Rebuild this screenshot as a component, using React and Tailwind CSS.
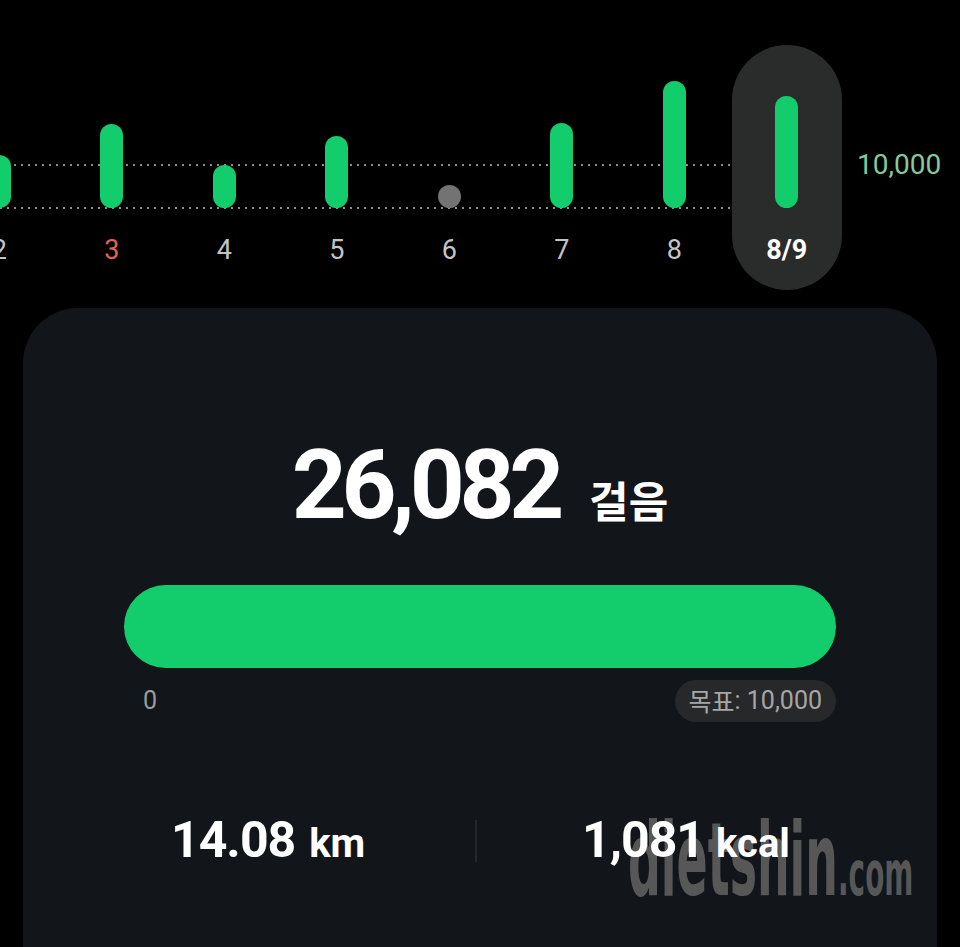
import React from "react";

const days = [
  { label: "2", h: 53 },
  { label: "3", h: 84, red: true },
  { label: "4", h: 43 },
  { label: "5", h: 72 },
  { label: "6", h: 0 },
  { label: "7", h: 85 },
  { label: "8", h: 127 },
  { label: "8/9", h: 112, selected: true },
];

const num = { fontFamily: "Roboto, 'Noto Sans CJK KR', sans-serif" };

const App = () => {
  return (
    <div className="relative w-[960px] h-[947px] overflow-hidden bg-black" style={num}>
      {/* weekly chart */}
      <div className="relative h-[300px]">
        <svg className="absolute left-0 top-0" width="732" height="300">
          <line x1="0" y1="165" x2="732" y2="165" stroke="#8c8c8c" strokeWidth="2" strokeDasharray="2 5" />
          <line x1="0" y1="208" x2="732" y2="208" stroke="#8c8c8c" strokeWidth="2" strokeDasharray="2 5" />
        </svg>
        <div className="relative flex ml-[-57px]">
          {days.map((d) => (
            <div key={d.label} className="w-[112.5px] shrink-0 flex justify-center pt-[45px]">
              <div
                className={`w-[110px] h-[245px] rounded-full flex flex-col items-center ${
                  d.selected ? "bg-[#2a2b2b]" : ""
                }`}
              >
                <div className="h-[163px] flex items-end justify-center">
                  {d.h > 0 ? (
                    <div className="w-[23px] rounded-full bg-[#13cd6d]" style={{ height: d.h }} />
                  ) : (
                    <div className="w-[23px] h-[23px] rounded-full bg-[#737373]" />
                  )}
                </div>
                <span
                  className={`mt-[26px] text-[27px] leading-[32px] ${
                    d.selected
                      ? "text-white font-bold"
                      : d.red
                      ? "text-[#e0625a]"
                      : "text-[#c4c4c4]"
                  }`}
                >
                  {d.label}
                </span>
              </div>
            </div>
          ))}
          <div className="ml-[14px] pt-[148px] text-[28px] leading-[34px] text-[#84c99a]">10,000</div>
        </div>
      </div>

      {/* summary card */}
      <div className="mx-[23px] mt-[8px] h-[700px] rounded-[55px] bg-[#121519] px-[101px]">
        <div className="flex items-baseline justify-center pt-[127px]">
          <span className="text-[96px] leading-[100px] font-bold tracking-[-0.055em] text-white">26,082</span>
          <span className="ml-[30px] text-[43px] font-bold text-white" style={{ fontFamily: "'Noto Sans CJK KR', sans-serif" }}>
            걸음
          </span>
        </div>
        <div className="mt-[50px] h-[83px] rounded-full bg-[#13cd6d]" />
        <div className="mt-[12px] flex items-center justify-between">
          <span className="ml-[19px] text-[25px] text-[#9c9c9c]">0</span>
          <span className="h-[42px] px-[14px] rounded-full bg-[#26282a] flex items-center text-[25px] text-[#a6a6a6]">
            <span style={{ fontFamily: "'Noto Sans CJK KR', sans-serif" }}>목표</span>: 10,000
          </span>
        </div>
        <div className="relative z-10 mt-[81px] flex items-center">
          <div className="w-[351px] pl-[47px] flex items-baseline text-white font-bold">
            <span className="text-[50px] tracking-[-0.02em]">14.08</span>
            <span className="ml-[14px] text-[40px]">km</span>
          </div>
          <div className="w-[2px] h-[42px] bg-[#24272b]" />
          <div className="pl-[105px] flex items-baseline text-white font-bold">
            <span className="text-[50px] tracking-[-0.02em]">1,081</span>
            <span className="ml-[12px] text-[40px]">kcal</span>
          </div>
        </div>
      </div>

      {/* watermark */}
      <div
        className="absolute left-[628px] top-[800px] flex items-baseline font-bold text-[#575757] origin-left scale-x-[0.5]"
        style={{ fontFamily: "'DejaVu Sans Condensed', 'DejaVu Sans', sans-serif" }}
      >
        <span className="text-[102px] leading-[120px]">dietshin</span>
        <span className="text-[62px] leading-[120px]">.com</span>
      </div>
    </div>
  );
};

export default App;
